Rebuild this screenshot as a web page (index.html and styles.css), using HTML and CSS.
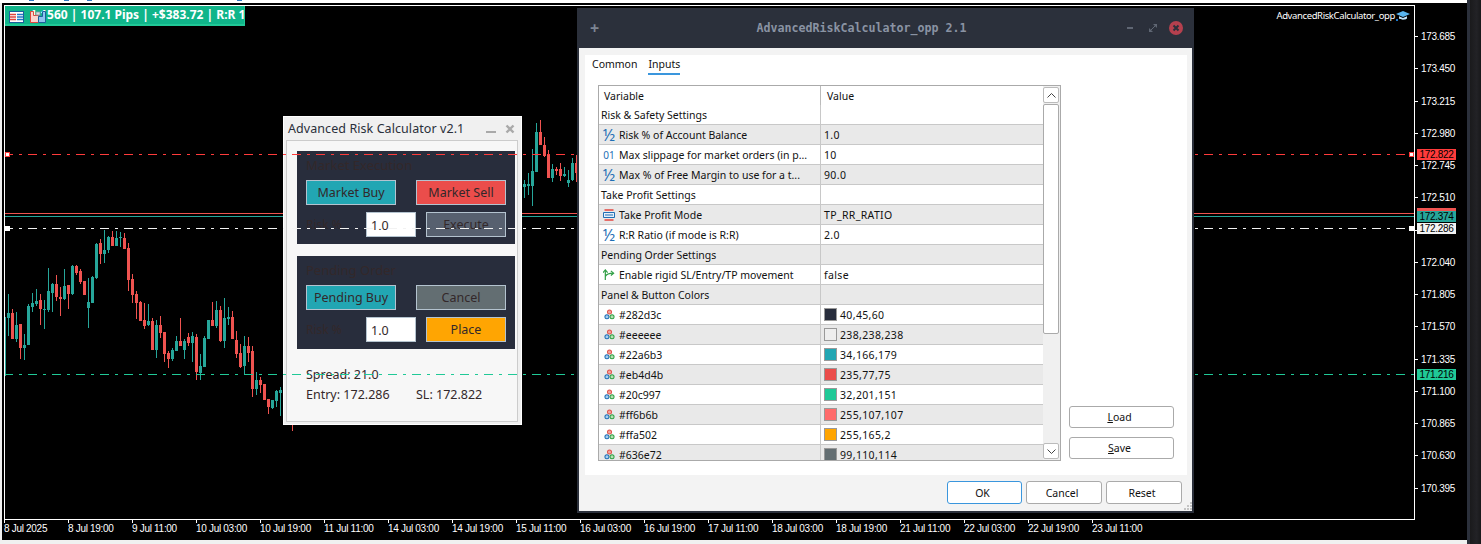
FILE: index.html
```html
<!DOCTYPE html>
<html lang="en">
<head>
    <meta charset="UTF-8">
    <meta name="viewport" content="width=device-width, initial-scale=1.0">
    <title>AdvancedRiskCalculator_opp</title>
    <link rel="stylesheet" href="styles.css">
</head>
<body>
    <svg class="icon-defs" width="0" height="0">
        <symbol id="icon-color" viewBox="0 0 12 12">
            <circle cx="6" cy="3.2" r="2.2" fill="#f3a6a0" stroke="#e0524b" stroke-width="1.1"/>
            <circle cx="3.2" cy="8.400" r="2.2" fill="#a9cdee" stroke="#1f6fb5" stroke-width="1.1"/>
            <circle cx="8.800" cy="8.400" r="2.2" fill="#b4e2b0" stroke="#2f9e44" stroke-width="1.1"/>
        </symbol>
    </svg>

    <div class="terminal">
        <div class="toolbar-edge">
            <span class="toolbar-bit bit-a"></span>
            <span class="toolbar-bit bit-b"></span>
            <span class="toolbar-bit bit-c"></span>
            <span class="toolbar-bit bit-d"></span>
        </div>
        <div class="workspace">
            <div class="plot" id="plot">
                <div class="hline solid-red"></div>
                <div class="hline solid-teal"></div>
                <div class="hline dash dash-sl"></div>
                <div class="hline dash dash-entry"></div>
                <div class="hline dash dash-tp"></div>
                <span class="handle handle-sl-l"></span>
                <span class="handle handle-sl-r"></span>
                <span class="handle handle-entry-l"></span>
                <span class="handle handle-entry-r"></span>

                <div class="trade-label">
                    <span class="trade-text">1:1560 | 107.1 Pips | +$383.72 | R:R 1:2</span>
                    <svg class="trade-icon icon-table" viewBox="0 0 15 12">
                        <rect x="0.5" y="0.5" width="14" height="11" fill="#fff" stroke="#1c5f9c"/>
                        <path d="M1 3.500h6M1 6h6M1 8.500h6" stroke="#e2463f" stroke-width="1.400"/>
                        <path d="M8 3.500h6M8 6h6M8 8.500h6" stroke="#1f78c8" stroke-width="1.400"/>
                    </svg>
                    <svg class="trade-icon icon-report" viewBox="0 0 16 12">
                        <path d="M0.500 0.500h3v4h5v7h-8z" fill="#fbd5cf" stroke="#e2463f"/>
                        <rect x="6" y="1" width="4" height="3" fill="#d8dde3" stroke="#8b95a1" stroke-width="0.800"/>
                        <path d="M8.500 11.500v-6h4v-5h3v11z" fill="#8fc3ef" stroke="#1c5f9c"/>
                    </svg>
                </div>

                <div class="ea-name">
                    <span>AdvancedRiskCalculator_opp</span>
                    <svg class="ea-hat" viewBox="0 0 14 10">
                        <path d="M7 0l7 3-7 3-7-3z" fill="#58b5f0"/>
                        <path d="M3 5.200v2.400c2 1.600 6 1.600 8 0v-2.400l-4 1.800z" fill="#bfe3fa"/>
                        <rect x="0" y="8" width="2" height="2" fill="#1f78c8"/>
                    </svg>
                </div>
            </div>

            <div class="price-axis">
                <div class="price-row">173.685</div>
                <div class="price-row">173.450</div>
                <div class="price-row">173.215</div>
                <div class="price-row">172.980</div>
                <div class="price-row">172.745</div>
                <div class="price-row">172.510</div>
                <div class="price-row price-hidden"></div>
                <div class="price-row">172.040</div>
                <div class="price-row">171.805</div>
                <div class="price-row">171.570</div>
                <div class="price-row">171.335</div>
                <div class="price-row">171.100</div>
                <div class="price-row">170.865</div>
                <div class="price-row">170.630</div>
                <div class="price-row">170.395</div>

                <span class="price-tag tag-sl">172.822</span>
                <span class="price-tag tag-ask"></span>
                <span class="price-tag tag-bid">172.374</span>
                <span class="price-tag tag-entry">172.286</span>
                <span class="price-tag tag-tp">171.216</span>
            </div>

            <div class="time-axis">
                <span class="time-label">8 Jul 2025</span>
                <span class="time-label">8 Jul 19:00</span>
                <span class="time-label">9 Jul 11:00</span>
                <span class="time-label">10 Jul 03:00</span>
                <span class="time-label">10 Jul 19:00</span>
                <span class="time-label">11 Jul 11:00</span>
                <span class="time-label">14 Jul 03:00</span>
                <span class="time-label">14 Jul 19:00</span>
                <span class="time-label">15 Jul 11:00</span>
                <span class="time-label">16 Jul 03:00</span>
                <span class="time-label">16 Jul 19:00</span>
                <span class="time-label">17 Jul 11:00</span>
                <span class="time-label">18 Jul 03:00</span>
                <span class="time-label">18 Jul 19:00</span>
                <span class="time-label">21 Jul 11:00</span>
                <span class="time-label">22 Jul 03:00</span>
                <span class="time-label">22 Jul 19:00</span>
                <span class="time-label">23 Jul 11:00</span>
            </div>
        </div>
    </div>
    <div class="side-strip"></div>

    <section class="risk-panel">
        <header class="risk-title">
            <span>Advanced Risk Calculator v2.1</span>
            <span class="risk-controls">
                <span class="risk-min"></span>
                <svg class="risk-close" viewBox="0 0 10 10">
                    <path d="M1.500 1.500l7 7M8.500 1.500l-7 7" stroke="#a9a9a9" stroke-width="2.400"/>
                </svg>
            </span>
        </header>
        <div class="risk-body">
            <div class="order-box">
                <div class="box-label">Market Execution</div>
                <div class="box-row spread">
                    <button class="btn btn-teal">Market Buy</button>
                    <button class="btn btn-red">Market Sell</button>
                </div>
                <div class="box-row">
                    <span class="risk-label">Risk %</span>
                    <span class="risk-input">1.0</span>
                    <button class="btn btn-slate btn-short">Execute</button>
                </div>
            </div>
            <div class="order-box">
                <div class="box-label">Pending Order</div>
                <div class="box-row spread">
                    <button class="btn btn-teal">Pending Buy</button>
                    <button class="btn btn-grey">Cancel</button>
                </div>
                <div class="box-row">
                    <span class="risk-label">Risk %</span>
                    <span class="risk-input">1.0</span>
                    <button class="btn btn-orange btn-short">Place</button>
                </div>
            </div>
            <div class="risk-info">
                <div>Spread: 21.0</div>
                <div class="info-row">
                    <span class="info-cell">Entry: 172.286</span>
                    <span>SL: 172.822</span>
                </div>
            </div>
        </div>
    </section>

    <section class="dialog">
        <header class="dialog-bar">
            <span class="bar-plus">+</span>
            <span class="bar-title">AdvancedRiskCalculator_opp 2.1</span>
            <span class="bar-controls">
                <span class="bar-min"></span>
                <svg class="bar-restore" viewBox="0 0 8 8">
                    <path d="M4 0h4v4zM0 4l4 4H0z" fill="#5f6673"/>
                    <path d="M1 7l6-6" stroke="#5f6673"/>
                </svg>
                <svg class="bar-close" viewBox="0 0 14 14">
                    <circle cx="7" cy="7" r="7" fill="#b5404e"/>
                    <path d="M4.500 4.500l5 5M9.500 4.500l-5 5" stroke="#2b303b" stroke-width="2"/>
                </svg>
            </span>
        </header>
        <div class="dialog-body">
            <div class="dialog-page">
                <nav class="tabs">
                    <span class="tab">Common</span>
                    <span class="tab tab-active">Inputs</span>
                </nav>
                <div class="inputs-pane">
                    <div class="params">
                        <div class="params-scroll">
                            <table class="params-table">
                                <thead>
                                    <tr><th>Variable</th><th>Value</th></tr>
                                </thead>
                                <tbody>
                                    <tr><td class="group">Risk &amp; Safety Settings</td><td></td></tr>
                                    <tr class="alt"><td><span class="cell"><span class="ico ico-num">½</span>Risk % of Account Balance</span></td><td>1.0</td></tr>
                                    <tr><td><span class="cell"><span class="ico ico-int">01</span>Max slippage for market orders (in p...</span></td><td>10</td></tr>
                                    <tr class="alt"><td><span class="cell"><span class="ico ico-num">½</span>Max % of Free Margin to use for a t...</span></td><td>90.0</td></tr>
                                    <tr><td class="group">Take Profit Settings</td><td></td></tr>
                                    <tr class="alt"><td><span class="cell"><span class="ico"><svg class="ico-svg" viewBox="0 0 12 12"><path d="M1.500 1h9M1.500 11h9" stroke="#e2463f" stroke-width="1.300"/><path d="M0.500 3.500h11v5h-11z" fill="#e4f0fa" stroke="#1f6fb5"/><path d="M2 6h8" stroke="#1f6fb5"/></svg></span>Take Profit Mode</span></td><td>TP_RR_RATIO</td></tr>
                                    <tr><td><span class="cell"><span class="ico ico-num">½</span>R:R Ratio (if mode is R:R)</span></td><td>2.0</td></tr>
                                    <tr class="alt"><td class="group">Pending Order Settings</td><td></td></tr>
                                    <tr><td><span class="cell"><span class="ico"><svg class="ico-svg" viewBox="0 0 13 13"><path d="M2.500 12V2M2.500 8C4 5 7 4.500 11 4.500" fill="none" stroke="#2f9e44" stroke-width="1.300"/><path d="M0 4l2.500-3L5 4M8.500 2l3 2.500-3 2.500" fill="none" stroke="#2f9e44" stroke-width="1.300"/></svg></span>Enable rigid SL/Entry/TP movement</span></td><td>false</td></tr>
                                    <tr class="alt"><td class="group">Panel &amp; Button Colors</td><td></td></tr>
                                    <tr><td><span class="cell"><span class="ico"><svg class="ico-color"><use href="#icon-color"/></svg></span>#282d3c</span></td><td><span class="cell"><i class="swatch swatch-dark"></i>40,45,60</span></td></tr>
                                    <tr class="alt"><td><span class="cell"><span class="ico"><svg class="ico-color"><use href="#icon-color"/></svg></span>#eeeeee</span></td><td><span class="cell"><i class="swatch swatch-light"></i>238,238,238</span></td></tr>
                                    <tr><td><span class="cell"><span class="ico"><svg class="ico-color"><use href="#icon-color"/></svg></span>#22a6b3</span></td><td><span class="cell"><i class="swatch swatch-teal"></i>34,166,179</span></td></tr>
                                    <tr class="alt"><td><span class="cell"><span class="ico"><svg class="ico-color"><use href="#icon-color"/></svg></span>#eb4d4b</span></td><td><span class="cell"><i class="swatch swatch-red"></i>235,77,75</span></td></tr>
                                    <tr><td><span class="cell"><span class="ico"><svg class="ico-color"><use href="#icon-color"/></svg></span>#20c997</span></td><td><span class="cell"><i class="swatch swatch-green"></i>32,201,151</span></td></tr>
                                    <tr class="alt"><td><span class="cell"><span class="ico"><svg class="ico-color"><use href="#icon-color"/></svg></span>#ff6b6b</span></td><td><span class="cell"><i class="swatch swatch-coral"></i>255,107,107</span></td></tr>
                                    <tr><td><span class="cell"><span class="ico"><svg class="ico-color"><use href="#icon-color"/></svg></span>#ffa502</span></td><td><span class="cell"><i class="swatch swatch-orange"></i>255,165,2</span></td></tr>
                                    <tr class="alt"><td><span class="cell"><span class="ico"><svg class="ico-color"><use href="#icon-color"/></svg></span>#636e72</span></td><td><span class="cell"><i class="swatch swatch-grey"></i>99,110,114</span></td></tr>
                                </tbody>
                            </table>
                        </div>
                        <div class="scrollbar">
                            <span class="scroll-btn"><svg class="scroll-arrow" viewBox="0 0 9 5"><path d="M0.500 4.500l4-4 4 4" fill="none" stroke="#444"/></svg></span>
                            <span class="scroll-thumb"></span>
                            <span class="scroll-btn"><svg class="scroll-arrow" viewBox="0 0 9 5"><path d="M0.500 0.500l4 4 4-4" fill="none" stroke="#444"/></svg></span>
                        </div>
                    </div>
                    <div class="side-buttons">
                        <button class="dlg-btn dlg-wide"><u>L</u>oad</button>
                        <button class="dlg-btn dlg-wide"><u>S</u>ave</button>
                    </div>
                </div>
            </div>
            <footer class="dialog-foot">
                <button class="dlg-btn dlg-ok">OK</button>
                <button class="dlg-btn">Cancel</button>
                <button class="dlg-btn">Reset</button>
            </footer>
            <svg class="grip" viewBox="0 0 9 9">
                <path d="M7 0h2v2H7zM4 3h2v2H4zM7 3h2v2H7zM1 6h2v2H1zM4 6h2v2H4zM7 6h2v2H7z" fill="#c4c4c4"/>
            </svg>
        </div>
    </section>

    <script src="chart.js"></script>
</body>
</html>
```

FILE: styles.css
```css
* {
    box-sizing: border-box;
}
html, body {
    height: 100%;
}
body {
    margin: 0;
    display: flex;
    overflow: hidden;
    background-color: #f0f0f0;
    font-family: "Noto Sans", sans-serif;
}
.icon-defs {
    position: absolute;
}

/* terminal and chart */
.terminal {
    width: 1467px;
    height: 544px;
}
.toolbar-edge {
    display: flex;
    height: 3px;
    background-color: #fff;
}
.toolbar-bit {
    width: 5px;
    height: 1px;
    background-color: #2a78c2;
}
.bit-a { margin-left: 29px; }
.bit-b { margin-left: 30px; }
.bit-c { margin-left: 18px; }
.bit-d { margin-left: 145px; }
.workspace {
    display: grid;
    grid-template-columns: 1411px 52px;
    grid-template-rows: 515px 20px;
    width: 1465px;
    height: 537px;
    margin-left: 2px;
    padding: 2px 0 0 2px;
    background-color: #000;
    color: #fff;
    font-family: "Liberation Sans", sans-serif;
    font-size: 10px;
    letter-spacing: -0.3px;
}
.side-strip {
    width: 14px;
    height: 544px;
    border-left: 3px solid #2b303b;
    background: linear-gradient(90deg, #1a1a1c, #222226 60%, #19191b);
}
.plot {
    position: relative;
    border: 1px solid #fff;
    overflow: hidden;
}
.candles {
    position: absolute;
    top: 0;
    left: 0;
}
.hline {
    position: absolute;
    left: 0;
    right: 0;
    height: 1px;
}
.solid-red {
    top: 207px;
    background-color: #ef5350;
}
.solid-teal {
    top: 210px;
    background-color: #26a69a;
}
.dash {
    z-index: 3;
    background-image: repeating-linear-gradient(90deg, var(--line) 0 9px, transparent 9px 15px, var(--line) 15px 18px, transparent 18px 24px);
    background-position: -1px 0;
}
.dash-sl {
    --line: #ff3b3b;
    top: 148px;
}
.dash-entry {
    --line: #f2f2f2;
    top: 222px;
}
.dash-tp {
    --line: #20c997;
    top: 368px;
}
.handle {
    position: absolute;
    z-index: 3;
    width: 5px;
    height: 5px;
    background-color: #fff;
}
.handle-sl-l {
    left: 0;
    top: 146px;
    border: 1px solid #ff3b3b;
}
.handle-sl-r {
    right: 0;
    top: 146px;
    border: 1px solid #ff3b3b;
}
.handle-entry-l {
    left: 0;
    top: 220px;
}
.handle-entry-r {
    right: 0;
    top: 220px;
}
.trade-label {
    position: absolute;
    left: 0;
    top: 0;
    width: 240px;
    height: 20px;
    padding-left: 25px;
    overflow: hidden;
    border-right: 1px solid #20c997;
    border-bottom: 2px solid #20c997;
    background-color: #10b58a;
    color: #fff;
    font-family: "Noto Sans", sans-serif;
    font-size: 12px;
    font-weight: bold;
    letter-spacing: 0;
    line-height: 18px;
    white-space: nowrap;
}
.trade-icon {
    position: absolute;
    top: 5px;
    height: 12px;
}
.icon-table {
    left: 4px;
    width: 15px;
}
.icon-report {
    left: 25px;
    width: 16px;
}
.ea-name {
    position: absolute;
    right: 4px;
    top: 4px;
    display: flex;
    align-items: center;
    gap: 1px;
    font-family: "Noto Sans", sans-serif;
    font-size: 9.500px;
    letter-spacing: -0.38px;
    line-height: 12px;
}
.ea-hat {
    width: 14px;
    height: 10px;
}

/* axes */
.price-axis {
    position: relative;
    padding-top: 15px;
}
.price-row {
    position: relative;
    height: 32.250px;
    padding-left: 6px;
    line-height: 33px;
}
.price-row::before {
    content: "";
    position: absolute;
    left: 0;
    top: 16px;
    width: 3px;
    height: 1px;
    background-color: #fff;
}
.price-tag {
    position: absolute;
    left: 2px;
    width: 39px;
    height: 11px;
    color: #000;
    font-size: 10px;
    line-height: 11px;
    text-align: center;
}
.tag-sl {
    top: 144px;
    background-color: #ff3b3b;
}
.tag-ask {
    top: 203px;
    height: 3px;
    background-color: #ef5350;
}
.tag-bid {
    top: 206px;
    background-color: #26a69a;
}
.tag-entry {
    top: 218px;
    background-color: #f2f2f2;
}
.tag-tp {
    top: 364px;
    background-color: #20c997;
}
.time-axis {
    grid-column: 1 / 3;
    display: flex;
}
.time-label {
    position: relative;
    flex: none;
    width: 64px;
    padding-top: 2px;
    line-height: 14px;
    white-space: nowrap;
}
.time-label::before {
    content: "";
    position: absolute;
    left: 0;
    top: 0;
    width: 1px;
    height: 3px;
    background-color: #fff;
}

/* risk panel */
.risk-panel {
    position: absolute;
    z-index: 2;
    left: 283px;
    top: 116px;
    width: 239px;
    height: 309px;
    padding: 0 3px 3px 2px;
    border: 1px solid #fff;
    background-color: #f0f0f0;
    color: #33282a;
    font-size: 12px;
}
.risk-title {
    display: flex;
    align-items: center;
    justify-content: space-between;
    height: 23px;
    padding: 0 3px 0 2px;
    color: #2a2f3a;
    font-size: 12.500px;
    letter-spacing: 0.07px;
}
.risk-controls {
    display: flex;
    align-items: center;
    gap: 9px;
}
.risk-min {
    width: 10px;
    height: 2px;
    margin-top: 6px;
    background-color: #a9a9a9;
}
.risk-close {
    width: 10px;
    height: 10px;
}
.risk-body {
    height: 282px;
    padding: 10px 2px 0 10px;
    border: 1px solid #ccc;
    background-color: #f7f7f7;
}
.order-box {
    display: flex;
    flex-direction: column;
    gap: 7px;
    height: 93px;
    margin-bottom: 12px;
    padding: 6px 9px 0;
    background-color: #282d3c;
}
.box-label {
    height: 16px;
    line-height: 16px;
    color: #33282a;
    font-size: 13px;
}
.box-row {
    display: flex;
    height: 25px;
}
.spread {
    justify-content: space-between;
}
.risk-label {
    width: 60px;
    line-height: 25px;
    color: #33282a;
}
.risk-input {
    width: 50px;
    margin-right: 10px;
    padding: 4px 4px;
    border: 1px solid #b4c3cf;
    background-color: #fff;
    font-size: 12.500px;
    line-height: 17px;
}
.btn {
    width: 90px;
    height: 25px;
    padding: 0;
    border: 1px solid #b4c3cf;
    color: #33282a;
    font-family: inherit;
    font-size: 12.500px;
}
.btn-short { width: 80px; }
.btn-teal { background-color: #22a6b3; }
.btn-red { background-color: #eb4d4b; }
.btn-slate { background-color: #57606f; }
.btn-grey { background-color: #636e72; }
.btn-orange { background-color: #ffa502; }
.risk-info {
    margin-top: 16px;
    padding-left: 9px;
    font-size: 12.500px;
    line-height: 20px;
}
.info-row {
    display: flex;
}
.info-cell {
    width: 110px;
}

/* settings dialog */
.dialog {
    position: absolute;
    z-index: 4;
    left: 577px;
    top: 8px;
    width: 617px;
    height: 505px;
    display: flex;
    flex-direction: column;
    border: 2px solid #2b303b;
    border-top: 0;
    color: #111;
    font-size: 10.500px;
}
.dialog-bar {
    display: flex;
    align-items: center;
    justify-content: center;
    position: relative;
    height: 40px;
    margin: 0 -2px;
    background-color: #2b303b;
}
.bar-plus {
    position: absolute;
    left: 13px;
    top: 9px;
    color: #7d8593;
    font-size: 16px;
    font-weight: bold;
    line-height: 22px;
}
.bar-title {
    margin-right: 48px;
    color: #8a93a3;
    font-family: "DejaVu Sans Mono", monospace;
    font-size: 11.650px;
    font-weight: bold;
}
.bar-controls {
    position: absolute;
    right: 11px;
    top: 13px;
    display: flex;
    align-items: center;
    gap: 16px;
}
.bar-min {
    width: 6px;
    height: 2px;
    background-color: #5f6673;
}
.bar-restore {
    width: 8px;
    height: 8px;
}
.bar-close {
    width: 14px;
    height: 14px;
    margin-left: -4px;
}
.dialog-body {
    position: relative;
    flex: 1;
    padding: 7px 5px 0 6px;
    background-color: #f3f3f3;
}
.dialog-page {
    height: 420px;
    padding: 0 0 0 13px;
    background-color: #fff;
}
.tabs {
    display: flex;
    gap: 14px;
    height: 30px;
    margin-left: -6px;
    padding-top: 1px;
}
.tab {
    height: 19px;
    line-height: 17px;
}
.tab + .tab {
    margin-left: -3px;
}
.tab-active {
    border-bottom: 2px solid #3a96dd;
}
.inputs-pane {
    display: flex;
    align-items: flex-end;
    gap: 8px;
}
.params {
    display: flex;
    width: 463px;
    height: 376px;
    border: 1px solid #aaa;
}
.params-scroll {
    width: 444px;
    overflow: hidden;
}
.params-table {
    width: 444px;
    table-layout: fixed;
    border-spacing: 0;
}
.params-table th {
    height: 19px;
    padding: 0 0 0 6px;
    font-weight: normal;
    text-align: left;
}
.params-table th:first-child {
    width: 222px;
    padding-left: 5px;
    border-right: 1px solid #bbb;
}
.params-table td {
    height: 20px;
    padding: 0 0 0 3px;
    border-bottom: 1px solid #c8c8c8;
    letter-spacing: 0.35px;
    white-space: nowrap;
    overflow: hidden;
}
.params-table td:first-child {
    padding-left: 4px;
    border-right: 1px solid #c8c8c8;
    letter-spacing: 0;
}
.params-table td.group {
    padding-left: 2px;
}
.alt td {
    background-color: #e9e9e9;
}
.cell {
    display: flex;
    align-items: center;
}
.ico {
    display: flex;
    justify-content: center;
    flex: none;
    width: 12px;
    margin-right: 4px;
    color: #1f6fb5;
    line-height: 14px;
}
.ico-num {
    font-size: 16px;
}
.ico-int {
    font-size: 10px;
}
.ico-svg {
    width: 12px;
    height: 12px;
}
.ico-color {
    width: 11px;
    height: 11px;
}
.swatch {
    flex: none;
    width: 13px;
    height: 13px;
    margin-right: 3px;
    border: 1px solid #999;
}
.swatch-dark { background-color: #282d3c; }
.swatch-light { background-color: #eeeeee; }
.swatch-teal { background-color: #22a6b3; }
.swatch-red { background-color: #eb4d4b; }
.swatch-green { background-color: #20c997; }
.swatch-coral { background-color: #ff6b6b; }
.swatch-orange { background-color: #ffa502; }
.swatch-grey { background-color: #636e72; }
.scrollbar {
    display: flex;
    flex-direction: column;
    width: 17px;
    padding: 1px 1px 1px 0;
    background-color: #f0f0f0;
}
.scroll-btn {
    display: flex;
    align-items: center;
    justify-content: center;
    flex: none;
    height: 16px;
    border: 1px solid #bbb;
    border-radius: 2px;
    background-color: #fff;
}
.scroll-arrow {
    width: 9px;
    height: 5px;
}
.scroll-thumb {
    height: 230px;
    margin-top: 1px;
    margin-bottom: auto;
    border: 1px solid #aaa;
    border-radius: 2px;
    background-color: #fff;
}
.side-buttons {
    display: flex;
    flex-direction: column;
    gap: 9px;
    padding-bottom: 2px;
}
.dlg-btn {
    width: 76px;
    height: 23px;
    padding: 0 4px 0 0;
    border: 1px solid #aaa;
    border-radius: 3px;
    background-color: #fff;
    color: #111;
    font-family: inherit;
    font-size: 10.500px;
}
.dlg-wide {
    width: 105px;
    height: 22px;
}
.dlg-ok {
    width: 75px;
    border-color: #3a96dd;
}
.dialog-foot {
    display: flex;
    justify-content: flex-end;
    gap: 4px;
    padding: 6px 5px 0 0;
}
.grip {
    position: absolute;
    right: 0;
    bottom: 0;
    width: 9px;
    height: 9px;
}
```

FILE: chart.js
```js
// y values are page pixels: wick top, body top, body bottom, wick bottom, colour
const G = '#26a69a';
const R = '#ef5350';

const leftCandles = [
    [294,313,318,336,G],[309,313,339,339,R],[312,325,339,342,G],[324,324,348,359,R],
    [334,345,348,360,G],[304,306,345,345,G],[293,303,307,312,G],[289,301,304,306,G],
    [294,300,309,325,R],[300,309,310,329,G],[268,291,310,312,G],[283,284,293,312,G],
    [275,284,297,301,R],[287,297,299,316,R],[269,286,299,300,G],[285,285,294,309,R],
    [265,266,294,295,G],[265,266,273,275,R],[269,271,282,284,R],[281,281,295,295,R],
    [278,302,308,328,G],[276,277,303,303,G],[243,244,278,279,G],[239,243,254,264,R],
    [230,250,254,263,G],[236,237,250,253,G],[231,237,246,246,R],[231,238,246,246,G],
    [232,237,238,247,G],[233,238,249,249,R],[243,248,280,291,R],[274,279,295,303,R],
    [291,294,303,319,R],[301,302,321,321,R],[303,320,326,329,R],[304,321,325,326,G],
    [318,321,350,350,R],[320,325,350,358,G],[316,325,333,338,R],[332,332,354,362,R],
    [351,353,359,368,R],[348,350,359,361,G],[336,341,351,351,G],[318,341,346,346,R],
    [339,341,350,359,G],[333,337,343,346,R],[332,336,343,362,G],[334,337,372,380,R],
    [354,366,373,380,G],[336,338,367,367,G],[320,320,339,339,G],[302,320,326,326,R],
    [301,310,326,328,G],[306,310,341,342,R],[298,318,341,348,G],[307,317,319,325,G],
    [311,317,339,339,R],[331,340,354,358,R],[344,353,367,368,R],[336,346,366,375,G],
    [337,346,353,362,R],[346,351,389,397,R],[372,380,389,395,G],[377,380,385,393,R],
    [384,384,400,400,R],[399,399,407,414,R],[400,400,408,409,G],[390,391,401,407,G],
    [387,390,393,416,G]
];

const rightCandles = [
    [180,184,187,198,G],[173,184,186,195,G],[149,171,186,206,G],[123,132,172,172,G],
    [120,132,145,145,R],[137,145,156,157,R],[150,154,178,178,R],[164,169,178,182,G],
    [167,169,171,175,R],[163,169,176,181,R],[167,174,176,177,G],[170,180,183,187,G],
    [158,163,180,181,G],[155,163,173,182,R]
];

function addRect(svg, x, y, w, h, fill) {
    const rect = document.createElementNS('http://www.w3.org/2000/svg', 'rect');
    rect.setAttribute('x', x);
    rect.setAttribute('y', y);
    rect.setAttribute('width', w);
    rect.setAttribute('height', h);
    rect.setAttribute('fill', fill);
    svg.appendChild(rect);
}

function drawSeries(svg, startX, candles) {
    candles.forEach((c, i) => {
        const x = startX + i * 4;
        addRect(svg, x, c[0], 1, c[3] - c[0], c[4]);
        addRect(svg, x - 1, c[1], 3, Math.max(c[2] - c[1], 1), c[4]);
    });
}

const plot = document.getElementById('plot');
const svg = document.createElementNS('http://www.w3.org/2000/svg', 'svg');
svg.setAttribute('class', 'candles');
svg.setAttribute('width', 1409);
svg.setAttribute('height', 513);
svg.setAttribute('viewBox', '5 6 1409 513');
svg.setAttribute('shape-rendering', 'crispEdges');

addRect(svg, 5, 317, 1, 59, G);
drawSeries(svg, 8, leftCandles);
addRect(svg, 292, 400, 1, 31, R);
drawSeries(svg, 524, rightCandles);
plot.prepend(svg);
```
